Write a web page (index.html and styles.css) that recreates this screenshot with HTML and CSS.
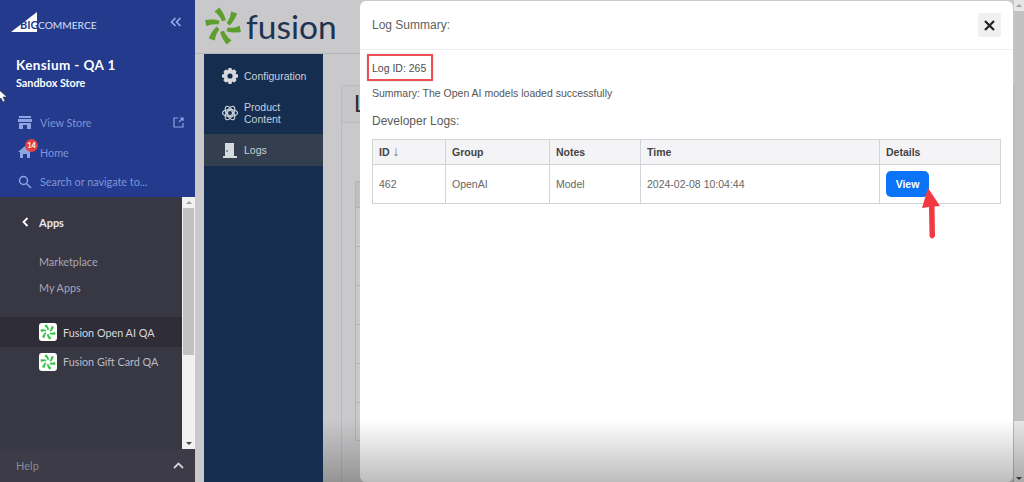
FILE: index.html
```html
<!DOCTYPE html>
<html lang="en">
<head>
    <meta charset="UTF-8">
    <meta name="viewport" content="width=device-width, initial-scale=1.0">
    <title>Fusion Logs</title>
    <link rel="stylesheet" href="styles.css">
</head>
<body>

<svg width="0" height="0" class="defs">
    <defs>
        <g id="wheel">
            <path id="blade" d="M-1 -5 C-3 -10 -6 -13 -9 -15 L-4 -19.500 C0 -15 2 -10 3 -6 Z"/>
            <use href="#blade" transform="rotate(60)"/>
            <use href="#blade" transform="rotate(120)"/>
            <use href="#blade" transform="rotate(180)"/>
            <use href="#blade" transform="rotate(240)"/>
            <use href="#blade" transform="rotate(300)"/>
        </g>
    </defs>
</svg>

<aside class="sidebar">
    <div class="sidebar-top">
        <div class="brand">
            <div class="bc-logo">
                <svg width="28" height="20" viewBox="0 0 28 20"><path d="M0 20 L26 0 V20 Z" fill="#fff"/></svg>
                <span class="bc-big">BIG</span>
                <span class="bc-commerce">COMMERCE</span>
            </div>
            <svg class="collapse" width="12" height="10" viewBox="0 0 12 10" fill="none" stroke="#9db0e6" stroke-width="1.6"><path d="M5.500 1 L1.500 5 L5.500 9 M10.500 1 L6.500 5 L10.500 9"/></svg>
        </div>
        <div class="store-name">Kensium - QA 1</div>
        <div class="store-type">Sandbox Store</div>
        <ul class="top-nav">
            <li>
                <svg width="14" height="13" viewBox="0 0 14 13" fill="#8ea3e2"><path d="M1 0 H13 V2 H1 Z M0 3 H14 V6 H0 Z M1 7 H13 V13 H9 V9 H5 V13 H1 Z"/></svg>
                <span>View Store</span>
                <svg class="ext" width="11" height="11" viewBox="0 0 11 11" fill="none" stroke="#8ea3e2" stroke-width="1.200"><path d="M5 1 H1 V10 H10 V6 M6 5 L10 1 M7 1 H10 V4"/></svg>
            </li>
            <li class="home">
                <svg width="14" height="12" viewBox="0 0 14 12" fill="#8ea3e2"><path d="M7 0 L14 6 H12 V12 H9 V8 H5 V12 H2 V6 H0 Z"/></svg>
                <span>Home</span>
                <b class="badge">14</b>
            </li>
            <li>
                <svg width="14" height="14" viewBox="0 0 14 14" fill="none" stroke="#8ea3e2" stroke-width="1.500"><circle cx="5.500" cy="5.500" r="4"/><path d="M8.500 8.500 L13 13"/></svg>
                <span>Search or navigate to...</span>
            </li>
        </ul>
    </div>

    <div class="sidebar-apps">
        <div class="apps-list">
            <div class="apps-title">
                <svg width="7" height="10" viewBox="0 0 7 10" fill="none" stroke="#fff" stroke-width="1.800"><path d="M5.500 1 L1.500 5 L5.500 9"/></svg>
                <span>Apps</span>
            </div>
            <a class="apps-link first">Marketplace</a>
            <a class="apps-link">My Apps</a>
            <div class="app-row active">
                <span class="app-icon"><svg width="16" height="16" viewBox="-20 -20 40 40" fill="#3bc24a"><use href="#wheel"/></svg></span>
                <span>Fusion Open AI QA</span>
            </div>
            <div class="app-row">
                <span class="app-icon"><svg width="16" height="16" viewBox="-20 -20 40 40" fill="#3bc24a"><use href="#wheel"/></svg></span>
                <span>Fusion Gift Card QA</span>
            </div>
        </div>
        <div class="scrollbar">
            <span class="arrow up"></span>
            <div class="thumb"></div>
            <span class="arrow down"></span>
        </div>
    </div>

    <div class="sidebar-help">
        <span>Help</span>
        <svg width="11" height="7" viewBox="0 0 11 7" fill="none" stroke="#d0d0d6" stroke-width="1.800"><path d="M1 6 L5.500 1.500 L10 6"/></svg>
    </div>

    <svg class="cursor" width="8" height="13" viewBox="0 0 8 13"><path d="M-2 0 L7 8 H3 L5 12 L3 13 L1 9 L-2 11 Z" fill="#fff" stroke="#222" stroke-width=".5"/></svg>
</aside>

<main class="app">
    <div class="app-scroll">
        <header class="app-header">
            <svg width="38" height="38" viewBox="-20 -20 40 40" fill="#5e9e2e"><use href="#wheel"/></svg>
            <span class="wordmark">fusion</span>
        </header>
        <div class="app-body">
            <nav class="app-nav">
                <a class="nav-item">
                    <svg width="16" height="16" viewBox="0 0 16 16"><path d="M6.500 0 H9.500 L10 2.200 L12.200 1.300 L14.500 3.600 L13.500 5.800 L16 6.500 V9.500 L13.700 10 L14.600 12.300 L12.400 14.600 L10 13.600 L9.500 16 H6.500 L6 13.700 L3.700 14.600 L1.400 12.400 L2.400 10 L0 9.500 V6.500 L2.300 6 L1.400 3.700 L3.600 1.400 L6 2.300 Z" fill="#d5d9e0"/><circle cx="8" cy="8" r="2.600" fill="#152e4f"/></svg>
                    <span>Configuration</span>
                </a>
                <a class="nav-item product">
                    <svg width="16" height="16" viewBox="0 0 16 16" fill="none" stroke="#cfd4dc" stroke-width="1.100"><circle cx="8" cy="8" r="2.500"/><ellipse cx="8" cy="8" rx="7.500" ry="3.500"/><ellipse cx="8" cy="8" rx="7.500" ry="3.500" transform="rotate(60 8 8)"/><ellipse cx="8" cy="8" rx="7.500" ry="3.500" transform="rotate(120 8 8)"/></svg>
                    <span>Product<br>Content</span>
                </a>
                <a class="nav-item current">
                    <svg width="16" height="16" viewBox="0 0 16 16"><path d="M3 1 H12 V14 H15 V16 H1 V14 H3 Z" fill="#d5d9e0"/><circle cx="5" cy="9" r=".8" fill="#2a3a50"/></svg>
                    <span>Logs</span>
                </a>
            </nav>
            <section class="content">
                <div class="card">
                    <div class="card-head">L</div>
                    <div class="card-rows">
                        <div class="bg-row head"></div>
                        <div class="bg-row"></div>
                        <div class="bg-row"></div>
                        <div class="bg-row"></div>
                        <div class="bg-row"></div>
                        <div class="bg-row"></div>
                        <div class="bg-row"></div>
                    </div>
                </div>
                <div class="fade"></div>
            </section>
        </div>
    </div>
    <div class="page-scroll">
        <span class="arrow up"></span>
        <div class="thumb"></div>
        <span class="arrow down"></span>
        <div class="fade"></div>
    </div>

    <!-- log summary modal -->
    <div class="modal">
        <div class="modal-head">
            <h5>Log Summary:</h5>
            <button class="close">
                <svg width="11" height="11" viewBox="0 0 11 11" stroke="#222" stroke-width="2.200"><path d="M1 1 L10 10 M10 1 L1 10"/></svg>
            </button>
        </div>
        <div class="modal-body">
            <p class="log-id"><span class="mark">Log ID: 265</span></p>
            <p class="summary">Summary: The Open AI models loaded successfully</p>
            <h6>Developer Logs:</h6>
            <table class="logs">
                <tr>
                    <th class="c-id">ID <span class="sort">↓</span></th>
                    <th class="c-group">Group</th>
                    <th class="c-notes">Notes</th>
                    <th class="c-time">Time</th>
                    <th>Details</th>
                </tr>
                <tr>
                    <td>462</td>
                    <td>OpenAI</td>
                    <td>Model</td>
                    <td>2024-02-08 10:04:44</td>
                    <td><button class="view">View</button></td>
                </tr>
            </table>
        </div>
        <svg class="pointer" width="20" height="52" viewBox="0 0 20 52"><path d="M7 0 L19 18 L13.500 18.500 L14 48 Q11 53 8.500 48 L8 19 L1 20 Z" fill="#f2393f"/></svg>
        <div class="fade"></div>
    </div>
</main>

</body>
</html>
```

FILE: styles.css
```css
* {
    box-sizing: border-box;
}

html, body {
    height: 100%;
}

body {
    margin: 0;
    display: flex;
    height: 482px;
    overflow: hidden;
    font-family: "Liberation Sans", Arial, sans-serif;
    background-color: #c9c8ca;
}

.defs {
    position: absolute;
}

/* left store sidebar */
.sidebar {
    position: relative;
    width: 195px;
    flex-shrink: 0;
    display: flex;
    flex-direction: column;
    font-family: Lato, "Noto Sans", sans-serif;
}

.sidebar-top {
    height: 197px;
    padding: 12px 0 0 16px;
    background-color: #233a8d;
    color: white;
}

.brand {
    display: flex;
    justify-content: space-between;
    align-items: center;
    height: 20px;
    padding-right: 13px;
}

.bc-logo {
    position: relative;
    display: flex;
    align-items: flex-end;
    margin-left: -5px;
    width: 90px;
    height: 20px;
}

.bc-big {
    position: absolute;
    left: 9px;
    bottom: 1px;
    font-size: 11px;
    font-weight: 700;
    color: #233a8d;
}

.bc-commerce {
    position: absolute;
    left: 27px;
    bottom: 1px;
    font-size: 10.200px;
    color: #d8e0f4;
}

.store-name {
    margin-top: 23px;
    font-size: 13.500px;
    line-height: 20px;
    font-weight: 700;
    letter-spacing: .4px;
}

.store-type {
    margin-top: 0;
    font-size: 10.800px;
    line-height: 15px;
    font-weight: 700;
}

.top-nav {
    list-style: none;
    margin: 18px 0 0 0;
    padding: 0 0 0 2px;
}

.top-nav li {
    position: relative;
    display: flex;
    align-items: center;
    gap: 8px;
    height: 29.500px;
    font-size: 10.800px;
    color: #7f96d9;
}

.ext {
    position: absolute;
    left: 155px;
}

.badge {
    position: absolute;
    left: 7px;
    top: 1px;
    width: 13px;
    height: 13px;
    border-radius: 50%;
    background-color: #e53e3e;
    color: white;
    font-size: 7.500px;
    line-height: 13px;
    text-align: center;
}

.sidebar-apps {
    flex: 1;
    display: flex;
    min-height: 0;
    background-color: #383744;
}

.apps-list {
    flex: 1;
}

.apps-title {
    display: flex;
    align-items: center;
    gap: 10px;
    height: 20px;
    margin: 15px 0 0 22px;
    font-size: 11px;
    font-weight: 700;
    color: #e8e8ec;
}

.apps-link {
    display: block;
    margin-left: 39px;
    height: 26px;
    line-height: 26px;
    font-size: 10.800px;
    color: #a8a6b4;
}

.apps-link.first {
    margin-top: 17px;
}

.app-row {
    display: flex;
    align-items: center;
    gap: 6px;
    height: 29px;
    padding-left: 39px;
    font-size: 10.800px;
    color: #bcbbc6;
}

.app-row.active {
    height: 30px;
    margin-top: 16px;
    background-color: #2e2d38;
    color: #d8d7de;
}

.app-icon {
    display: flex;
    align-items: center;
    justify-content: center;
    width: 18px;
    height: 18px;
    border-radius: 3px;
    background-color: white;
}

.scrollbar {
    display: flex;
    flex-direction: column;
    width: 13px;
    background-color: #f1f1f1;
}

.thumb {
    background-color: #c1c1c1;
}

.scrollbar .thumb {
    height: 147px;
    margin: 0 1px;
}

.arrow {
    display: block;
    width: 0;
    height: 0;
    margin: 4px auto;
    border-left: 3px solid transparent;
    border-right: 3px solid transparent;
}

.arrow.up {
    border-bottom: 3px solid #a0a0a0;
}

.arrow.down {
    margin-top: auto;
    border-top: 3px solid #444;
}

.sidebar-help {
    display: flex;
    justify-content: space-between;
    align-items: center;
    height: 33px;
    padding: 0 11px 0 16px;
    background-color: #3c3b47;
    font-size: 11px;
    color: #8b8a96;
}

.cursor {
    position: absolute;
    left: 0;
    top: 89px;
}

/* fusion app behind the modal */
.app {
    flex: 1;
    display: flex;
    min-width: 0;
}

.app-scroll {
    flex: 1;
    display: flex;
    flex-direction: column;
    min-width: 0;
}

.app-header {
    display: flex;
    align-items: center;
    gap: 4px;
    height: 54px;
    padding: 0 0 2px 9px;
    border-bottom: 1px solid #b5b4b7;
}

.wordmark {
    font-family: Lato, sans-serif;
    font-size: 33.500px;
    line-height: 40px;
    color: #1d3350;
}

.app-body {
    flex: 1;
    display: flex;
    padding-left: 9px;
    min-height: 0;
}

.app-nav {
    width: 119px;
    flex-shrink: 0;
    padding-top: 6px;
    background-color: #152e4f;
}

.nav-item {
    display: flex;
    align-items: center;
    gap: 6px;
    height: 32px;
    padding-left: 18px;
    font-size: 10.500px;
    line-height: 12px;
    color: #c7cfdb;
}

.nav-item.product {
    height: 42px;
}

.nav-item.current {
    height: 32px;
    background-color: #333f4e;
}

.content {
    position: relative;
    flex: 1;
    padding: 31px 0 0 18px;
    overflow: hidden;
}

.card {
    height: 100%;
    border: 1px solid #b9b8bb;
    border-bottom: none;
    border-radius: 3px 0 0 0;
}

.card-head {
    height: 37px;
    padding-left: 12px;
    border-bottom: 1px solid #b9b8bb;
    font-size: 24px;
    line-height: 36px;
    color: #2c2c2e;
    background-color: #c6c5c8;
}

.card-rows {
    margin: 58px 0 0 13px;
    border-left: 1px solid #b3b2b5;
}

.bg-row {
    height: 39px;
    border-top: 1px solid #b3b2b5;
}

.bg-row.head {
    height: 26px;
    background-color: #c0bfc2;
}

.bg-row:last-child {
    border-bottom: 1px solid #b3b2b5;
}

.fade {
    position: absolute;
    left: 0;
    right: 0;
    bottom: 0;
    height: 62px;
    background: linear-gradient(rgba(0, 0, 0, 0), rgba(0, 0, 0, .26));
    pointer-events: none;
}

.page-scroll {
    position: relative;
    display: flex;
    flex-direction: column;
    width: 10px;
    background-color: #e6e6e6;
}

.page-scroll .thumb {
    height: 410px;
}

.page-scroll .arrow.down {
    margin-bottom: 2px;
}

/* modal */
.modal {
    position: absolute;
    left: 360px;
    top: 1px;
    width: 653px;
    height: 481px;
    overflow: hidden;
    background-color: white;
    border-radius: 6px;
    color: #555;
}

.modal-head {
    display: flex;
    justify-content: space-between;
    align-items: center;
    height: 49px;
    padding: 0 12px;
    border-bottom: 1px solid #efeff1;
}

.modal-head h5 {
    margin: 0;
    font-size: 12px;
    font-weight: 400;
    color: #5f5f5f;
}

.close {
    display: flex;
    align-items: center;
    justify-content: center;
    width: 23px;
    height: 24px;
    border: none;
    border-radius: 2px;
    background-color: #f0eff1;
}

.modal-body {
    padding: 4px 12px 0 12px;
}

.log-id {
    margin: 0;
    height: 27px;
    font-size: 10.500px;
    line-height: 27px;
    color: #4d4d4d;
}

.mark {
    display: inline-block;
    width: 66px;
    height: 27px;
    margin-left: -5px;
    padding-left: 3px;
    border: 2px solid #ee5055;
    line-height: 24px;
    box-shadow: 0 0 2px rgba(0, 0, 0, .2);
}

.summary {
    margin: 5px 0 0 0;
    font-size: 10.500px;
    line-height: 14px;
}

.modal-body h6 {
    margin: 13px 0 0 0;
    font-size: 12px;
    line-height: 17px;
    font-weight: 400;
    color: #5a5a5a;
}

.logs {
    width: 629px;
    margin-top: 9px;
    border-collapse: collapse;
    table-layout: fixed;
    font-size: 10.500px;
}

.logs th, .logs td {
    padding: 0 0 0 6px;
    border: 1px solid #d3d2d6;
    text-align: left;
}

.logs th {
    height: 25px;
    background-color: #f4f3f5;
    color: #444;
}

.logs td {
    height: 39px;
    color: #666;
}

.c-id {
    width: 73px;
}

.c-group {
    width: 104px;
}

.c-notes {
    width: 91px;
}

.c-time {
    width: 239px;
}

.sort {
    font-weight: 400;
    font-size: 14px;
    line-height: 10px;
    color: #777;
}

.view {
    width: 43px;
    height: 26px;
    padding: 0;
    border: none;
    border-radius: 5px;
    background-color: #0a74f5;
    color: white;
    font-family: "Liberation Sans", Arial, sans-serif;
    font-size: 10.500px;
    font-weight: 700;
}

.pointer {
    position: absolute;
    left: 561px;
    top: 187px;
}
```
